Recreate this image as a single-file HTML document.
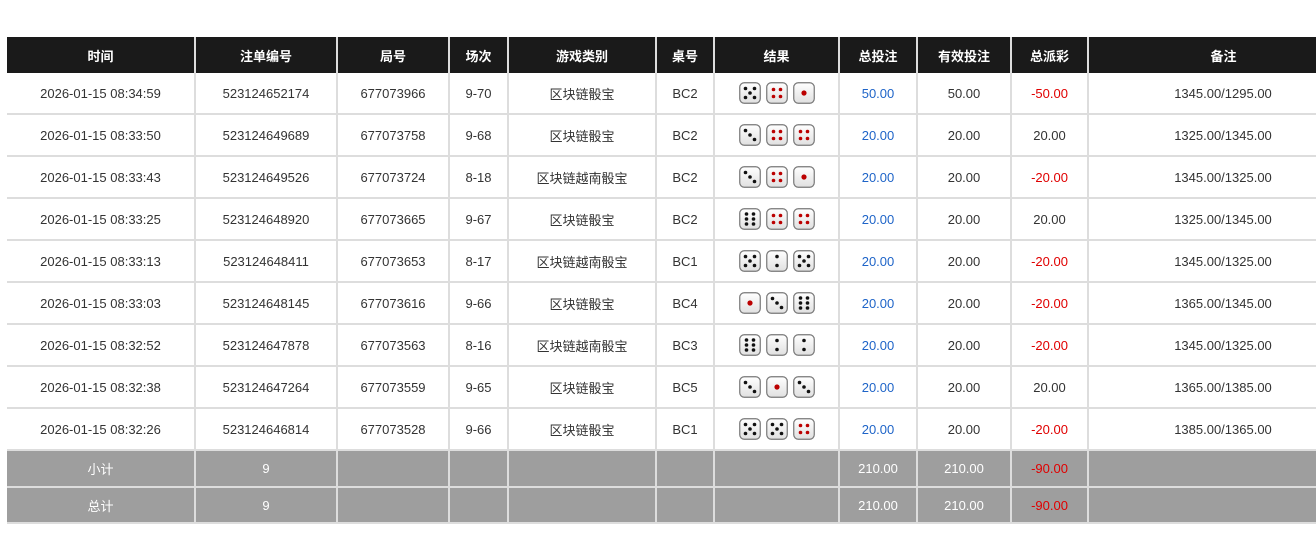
<!DOCTYPE html><html><head><meta charset="utf-8"><style>
body{margin:0;background:#fff;width:1316px;height:536px;overflow:hidden;font-family:"Liberation Sans","Noto Sans CJK SC",sans-serif;}
table{position:absolute;left:7px;top:37px;border-collapse:collapse;table-layout:fixed;width:1351px;font-size:13px;color:#333}
th{background:#1a1a1a;color:#fff;font-weight:bold;height:36px;border-left:2px solid #ddd;padding:0;font-size:13px}
th:first-child{border-left:none}
td{height:40px;border:2px solid #ddd;border-top:none;text-align:center;padding:0;white-space:nowrap}
td:first-child{border-left:none}
tr.f td{background:#9e9e9e;color:#fff;height:35px;border-color:#ddd}
.b{color:#1e64c8}td.r,tr.f td.r{color:#e00000}
tr.f:last-child td{height:34px}
svg.d{width:22px;height:22px;vertical-align:middle;margin:0 2.5px}
</style></head><body>
<svg width="0" height="0" style="position:absolute">
<defs>
<linearGradient id="g" x1="0" y1="0" x2="0" y2="1"><stop offset="0" stop-color="#fff"/><stop offset="1" stop-color="#e0e0e0"/></linearGradient>
<symbol id="bx" viewBox="0 0 22 22"><rect x="0.75" y="0.75" width="20.5" height="20.5" rx="4.5" fill="url(#g)" stroke="#777" stroke-width="1.2"/></symbol>
<symbol id="d1" viewBox="0 0 22 22"><use href="#bx"/><circle cx="11" cy="11" r="2.6" fill="#b00"/></symbol>
<symbol id="d2" viewBox="0 0 22 22"><use href="#bx"/><circle cx="11" cy="6.5" r="1.8" fill="#111"/><circle cx="11" cy="15.5" r="1.8" fill="#111"/></symbol>
<symbol id="d3" viewBox="0 0 22 22"><use href="#bx"/><circle cx="6.5" cy="6.5" r="1.8" fill="#111"/><circle cx="11" cy="11" r="1.8" fill="#111"/><circle cx="15.5" cy="15.5" r="1.8" fill="#111"/></symbol>
<symbol id="d4" viewBox="0 0 22 22"><use href="#bx"/><circle cx="7.5" cy="7.5" r="1.8" fill="#b00"/><circle cx="14.5" cy="7.5" r="1.8" fill="#b00"/><circle cx="7.5" cy="14.5" r="1.8" fill="#b00"/><circle cx="14.5" cy="14.5" r="1.8" fill="#b00"/></symbol>
<symbol id="d5" viewBox="0 0 22 22"><use href="#bx"/><circle cx="6.5" cy="6.5" r="1.8" fill="#111"/><circle cx="15.5" cy="6.5" r="1.8" fill="#111"/><circle cx="11" cy="11" r="1.8" fill="#111"/><circle cx="6.5" cy="15.5" r="1.8" fill="#111"/><circle cx="15.5" cy="15.5" r="1.8" fill="#111"/></symbol>
<symbol id="d6" viewBox="0 0 22 22"><use href="#bx"/><circle cx="7.5" cy="6" r="1.8" fill="#111"/><circle cx="14.5" cy="6" r="1.8" fill="#111"/><circle cx="7.5" cy="11" r="1.8" fill="#111"/><circle cx="14.5" cy="11" r="1.8" fill="#111"/><circle cx="7.5" cy="16" r="1.8" fill="#111"/><circle cx="14.5" cy="16" r="1.8" fill="#111"/></symbol>
</defs></svg>
<table>
<colgroup><col style="width:188px"><col style="width:142px"><col style="width:112px"><col style="width:59px"><col style="width:148px"><col style="width:58px"><col style="width:125px"><col style="width:78px"><col style="width:94px"><col style="width:77px"><col style="width:270px"></colgroup>
<tr><th>时间</th><th>注单编号</th><th>局号</th><th>场次</th><th>游戏类别</th><th>桌号</th><th>结果</th><th>总投注</th><th>有效投注</th><th>总派彩</th><th>备注</th></tr>
<tr><td>2026-01-15 08:34:59</td><td>523124652174</td><td>677073966</td><td>9-70</td><td>区块链骰宝</td><td>BC2</td><td><svg class="d"><use href="#d5"/></svg><svg class="d"><use href="#d4"/></svg><svg class="d"><use href="#d1"/></svg></td><td class="b">50.00</td><td>50.00</td><td class="r">-50.00</td><td>1345.00/1295.00</td></tr>
<tr><td>2026-01-15 08:33:50</td><td>523124649689</td><td>677073758</td><td>9-68</td><td>区块链骰宝</td><td>BC2</td><td><svg class="d"><use href="#d3"/></svg><svg class="d"><use href="#d4"/></svg><svg class="d"><use href="#d4"/></svg></td><td class="b">20.00</td><td>20.00</td><td>20.00</td><td>1325.00/1345.00</td></tr>
<tr><td>2026-01-15 08:33:43</td><td>523124649526</td><td>677073724</td><td>8-18</td><td>区块链越南骰宝</td><td>BC2</td><td><svg class="d"><use href="#d3"/></svg><svg class="d"><use href="#d4"/></svg><svg class="d"><use href="#d1"/></svg></td><td class="b">20.00</td><td>20.00</td><td class="r">-20.00</td><td>1345.00/1325.00</td></tr>
<tr><td>2026-01-15 08:33:25</td><td>523124648920</td><td>677073665</td><td>9-67</td><td>区块链骰宝</td><td>BC2</td><td><svg class="d"><use href="#d6"/></svg><svg class="d"><use href="#d4"/></svg><svg class="d"><use href="#d4"/></svg></td><td class="b">20.00</td><td>20.00</td><td>20.00</td><td>1325.00/1345.00</td></tr>
<tr><td>2026-01-15 08:33:13</td><td>523124648411</td><td>677073653</td><td>8-17</td><td>区块链越南骰宝</td><td>BC1</td><td><svg class="d"><use href="#d5"/></svg><svg class="d"><use href="#d2"/></svg><svg class="d"><use href="#d5"/></svg></td><td class="b">20.00</td><td>20.00</td><td class="r">-20.00</td><td>1345.00/1325.00</td></tr>
<tr><td>2026-01-15 08:33:03</td><td>523124648145</td><td>677073616</td><td>9-66</td><td>区块链骰宝</td><td>BC4</td><td><svg class="d"><use href="#d1"/></svg><svg class="d"><use href="#d3"/></svg><svg class="d"><use href="#d6"/></svg></td><td class="b">20.00</td><td>20.00</td><td class="r">-20.00</td><td>1365.00/1345.00</td></tr>
<tr><td>2026-01-15 08:32:52</td><td>523124647878</td><td>677073563</td><td>8-16</td><td>区块链越南骰宝</td><td>BC3</td><td><svg class="d"><use href="#d6"/></svg><svg class="d"><use href="#d2"/></svg><svg class="d"><use href="#d2"/></svg></td><td class="b">20.00</td><td>20.00</td><td class="r">-20.00</td><td>1345.00/1325.00</td></tr>
<tr><td>2026-01-15 08:32:38</td><td>523124647264</td><td>677073559</td><td>9-65</td><td>区块链骰宝</td><td>BC5</td><td><svg class="d"><use href="#d3"/></svg><svg class="d"><use href="#d1"/></svg><svg class="d"><use href="#d3"/></svg></td><td class="b">20.00</td><td>20.00</td><td>20.00</td><td>1365.00/1385.00</td></tr>
<tr><td>2026-01-15 08:32:26</td><td>523124646814</td><td>677073528</td><td>9-66</td><td>区块链骰宝</td><td>BC1</td><td><svg class="d"><use href="#d5"/></svg><svg class="d"><use href="#d5"/></svg><svg class="d"><use href="#d4"/></svg></td><td class="b">20.00</td><td>20.00</td><td class="r">-20.00</td><td>1385.00/1365.00</td></tr>
<tr class="f"><td>小计</td><td>9</td><td></td><td></td><td></td><td></td><td></td><td>210.00</td><td>210.00</td><td class="r">-90.00</td><td></td></tr>
<tr class="f"><td>总计</td><td>9</td><td></td><td></td><td></td><td></td><td></td><td>210.00</td><td>210.00</td><td class="r">-90.00</td><td></td></tr>
</table>
</body></html>
